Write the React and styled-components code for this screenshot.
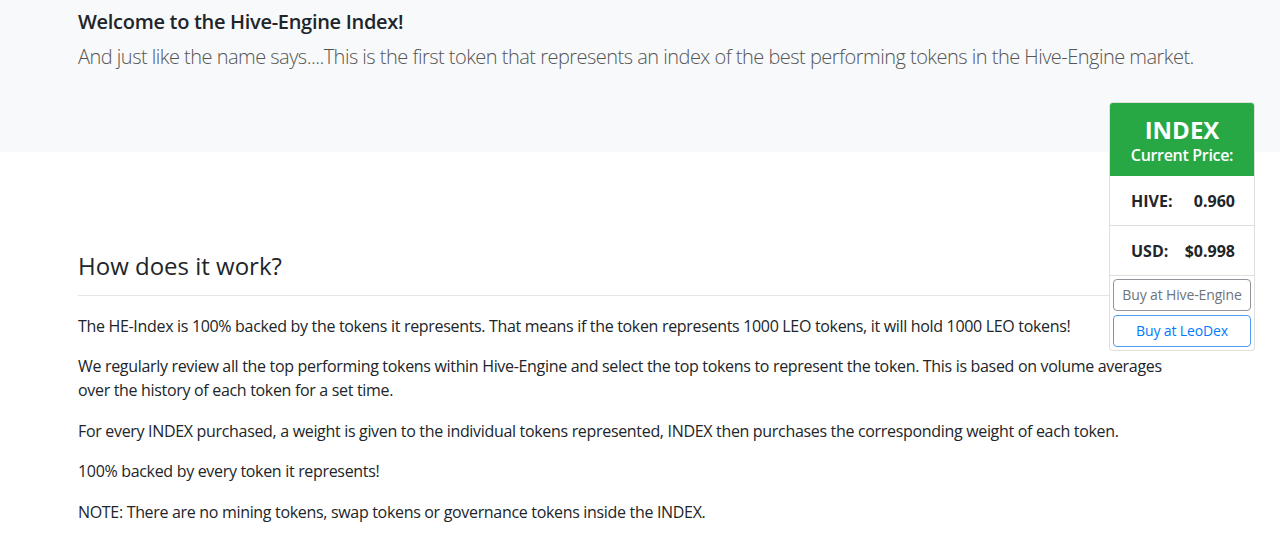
import React from "react";
import styled, { createGlobalStyle } from "styled-components";

const FONT = `"Open Sans", "Noto Sans", "Liberation Sans", sans-serif`;

const GlobalStyle = createGlobalStyle`
  html, body {
    margin: 0;
    padding: 0;
    background: #fff;
  }
  body {
    font-family: ${FONT};
    font-size: 16px;
    line-height: 1.5;
    letter-spacing: -0.02em;
    color: #212529;
  }
  *, *::before, *::after { box-sizing: border-box; }
`;

const Hero = styled.section`
  background: #f8f9fa;
  height: 152px;
  padding: 10px 25px 0 78px;
`;

const HeroTitle = styled.h1`
  margin: 0 0 8px;
  font-size: 20px;
  line-height: 1.2;
  font-weight: 600;
  letter-spacing: -0.015em;
`;

const Lead = styled.p`
  margin: 0;
  font-size: 20px;
  line-height: 1.5;
  font-weight: 300;
  letter-spacing: -0.026em;
  color: #555;
`;

/* Price card floats to the right and hangs over the hero band */
const PriceCard = styled.aside`
  float: right;
  clear: right;
  width: 146px;
  margin-top: 30px;
  background: #fff;
  border: 1px solid rgba(0, 0, 0, 0.125);
  border-radius: 4px;
  overflow: hidden;
  text-align: center;
`;

const CardHeader = styled.div`
  background: #28a745;
  color: #fff;
  padding: 14px 0 9px;
`;

const Ticker = styled.div`
  font-size: 24px;
  font-weight: 700;
  line-height: 1.1;
  letter-spacing: 0;
`;

const Caption = styled.div`
  font-size: 16px;
  font-weight: 600;
  line-height: 1.5;
`;

const PriceRow = styled.div`
  display: flex;
  justify-content: space-between;
  padding: 13px 19px 12px 21px;
  border-bottom: 1px solid rgba(0, 0, 0, 0.125);
  font-weight: 700;
  line-height: 24px;
  letter-spacing: 0;
`;

const CardActions = styled.div`
  display: flex;
  flex-direction: column;
  gap: 4px;
  padding: 3px;
`;

const OutlineButton = styled.button`
  display: block;
  width: 100%;
  margin: 0;
  padding: 5px 0;
  font-family: ${FONT};
  font-size: 14px;
  line-height: 20px;
  letter-spacing: -0.01em;
  color: ${(p) => p.$color};
  background: transparent;
  border: 1px solid ${(p) => p.$border};
  border-radius: 4px;
  cursor: pointer;
  white-space: nowrap;
`;

const Main = styled.main`
  padding: 0 25px 0 78px;
`;

const SectionTitle = styled.h2`
  margin: 100px 0 0;
  font-size: 24px;
  line-height: 1.2;
  font-weight: 500;
  letter-spacing: 0;
`;

const Rule = styled.hr`
  overflow: hidden;
  height: 0;
  margin: 14px 0 18px;
  border: 0;
  border-top: 1px solid rgba(0, 0, 0, 0.1);
`;

const Paragraph = styled.p`
  max-width: 1108px;
  margin: 0 0 16.5px;
`;

export default function App() {
  return (
    <>
      <GlobalStyle />
      <Hero>
        <HeroTitle>Welcome to the Hive-Engine Index!</HeroTitle>
        <Lead>
          And just like the name says....This is the first token that represents an index of the
          best performing tokens in the Hive-Engine market.
        </Lead>
        <PriceCard>
          <CardHeader>
            <Ticker>INDEX</Ticker>
            <Caption>Current Price:</Caption>
          </CardHeader>
          <PriceRow>
            <span>HIVE:</span>
            <span>0.960</span>
          </PriceRow>
          <PriceRow>
            <span>USD:</span>
            <span>$0.998</span>
          </PriceRow>
          <CardActions>
            <OutlineButton $color="#6c757d" $border="#8f959a">
              Buy at Hive-Engine
            </OutlineButton>
            <OutlineButton $color="#007bff" $border="#4a9cf5">
              Buy at LeoDex
            </OutlineButton>
          </CardActions>
        </PriceCard>
      </Hero>
      <Main>
        <SectionTitle>How does it work?</SectionTitle>
        <Rule />
        <Paragraph>
          The HE-Index is 100% backed by the tokens it represents. That means if the token
          represents 1000 LEO tokens, it will hold 1000 LEO tokens!
        </Paragraph>
        <Paragraph>
          We regularly review all the top performing tokens within Hive-Engine and select the top
          tokens to represent the token. This is based on volume averages over the history of each
          token for a set time.
        </Paragraph>
        <Paragraph>
          For every INDEX purchased, a weight is given to the individual tokens represented, INDEX
          then purchases the corresponding weight of each token.
        </Paragraph>
        <Paragraph>100% backed by every token it represents!</Paragraph>
        <Paragraph>
          NOTE: There are no mining tokens, swap tokens or governance tokens inside the INDEX.
        </Paragraph>
      </Main>
    </>
  );
}
